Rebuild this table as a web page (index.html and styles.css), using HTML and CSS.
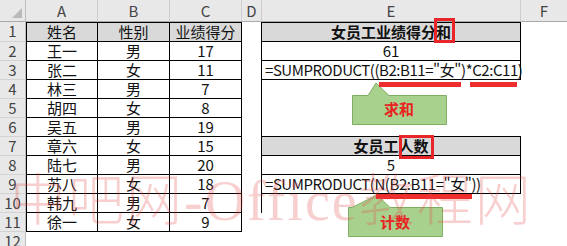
FILE: index.html
```html
<!DOCTYPE html>
<html lang="zh">
<head>
<meta charset="utf-8">
<link rel="stylesheet" href="styles.css">
</head>
<body>
<div class="page">
  <div class="sheet">
    <div class="corner"><span class="tri"></span></div>
    <div class="ch">A</div><div class="ch">B</div><div class="ch">C</div><div class="ch">D</div><div class="ch">E</div><div class="ch last">F</div>

    <div class="rh">1</div>
    <div class="c t tl top fill">姓名</div><div class="c t top fill">性别</div><div class="c t top fill">业绩得分</div><div class="c d"></div>
    <div class="c e top fill bold">女员工业绩得分和</div><div class="c"></div>

    <div class="rh">2</div>
    <div class="c t tl">王一</div><div class="c t">男</div><div class="c t">17</div><div class="c d"></div>
    <div class="c e">61</div><div class="c"></div>

    <div class="rh">3</div>
    <div class="c t tl">张二</div><div class="c t">女</div><div class="c t">11</div><div class="c d"></div>
    <div class="c e left formula">=SUMPRODUCT((B2:B11="女")*C2:C11)</div><div class="c"></div>

    <div class="rh">4</div>
    <div class="c t tl">林三</div><div class="c t">男</div><div class="c t">7</div><div class="c d"></div>
    <div class="c"></div><div class="c"></div>

    <div class="rh">5</div>
    <div class="c t tl">胡四</div><div class="c t">女</div><div class="c t">8</div><div class="c d"></div>
    <div class="c"></div><div class="c"></div>

    <div class="rh">6</div>
    <div class="c t tl">吴五</div><div class="c t">男</div><div class="c t">19</div><div class="c d"></div>
    <div class="c e-top"></div><div class="c"></div>

    <div class="rh">7</div>
    <div class="c t tl">章六</div><div class="c t">女</div><div class="c t">15</div><div class="c d"></div>
    <div class="c e fill bold">女员工人数</div><div class="c"></div>

    <div class="rh">8</div>
    <div class="c t tl">陆七</div><div class="c t">男</div><div class="c t">20</div><div class="c d"></div>
    <div class="c e">5</div><div class="c"></div>

    <div class="rh">9</div>
    <div class="c t tl">苏八</div><div class="c t">女</div><div class="c t">18</div><div class="c d"></div>
    <div class="c e left formula">=SUMPRODUCT(N(B2:B11="女"))</div><div class="c"></div>

    <div class="rh">10</div>
    <div class="c t tl">韩九</div><div class="c t">男</div><div class="c t">7</div><div class="c d"></div>
    <div class="c"></div><div class="c"></div>

    <div class="rh">11</div>
    <div class="c t tl">徐一</div><div class="c t">女</div><div class="c t">9</div><div class="c"></div>
    <div class="c"></div><div class="c"></div>

    <div class="rh">12</div>
    <div class="c"></div><div class="c"></div><div class="c"></div><div class="c"></div>
    <div class="c"></div><div class="c"></div>
  </div>

  <svg class="callouts" width="567" height="246" viewBox="0 0 567 246">
    <path d="M352.5 95.5 H368 L376 83 L389 95.5 H446.5 V124.5 H352.5 Z" fill="#a9d18e" stroke="#7fae62" stroke-width="1"/>
    <path d="M348.5 207.5 H352 L377 195 L390 207.5 H442.5 V236.5 H348.5 Z" fill="#a9d18e" stroke="#7fae62" stroke-width="1"/>
    <rect x="379" y="82" width="82" height="5" fill="#ee2d2d"/>
    <rect x="470" y="82" width="47" height="5" fill="#ee2d2d"/>
    <rect x="376" y="194" width="96" height="5" fill="#ee2d2d"/>
  </svg>

  <div class="label label-sum">求和</div>
  <div class="label label-count">计数</div>
  <div class="mark mark-he"></div>
  <div class="mark mark-rs"></div>

  <div class="watermark">中吧网<span class="wm-latin">-Office</span>教程网</div>
</div>
</body>
</html>
```

FILE: styles.css
```css
html, body {
  margin: 0;
  padding: 0;
  background: #ffffff;
}

.page {
  position: relative;
  width: 567px;
  height: 246px;
  overflow: hidden;
  font-family: "Noto Sans CJK SC", "Liberation Sans", sans-serif;
}

.sheet {
  display: grid;
  grid-template-columns: 26px 72px 72px 72px 20px 259px 46px;
  grid-template-rows: 22px 20px repeat(11, 19px);
}

.corner {
  position: relative;
  background: #e8e8e8;
  border-right: 1px solid #bdbdbd;
  border-bottom: 1px solid #a9a9a9;
  box-sizing: border-box;
}

.tri {
  position: absolute;
  right: 3px;
  bottom: 3px;
  width: 0;
  height: 0;
  border-left: 10px solid transparent;
  border-bottom: 10px solid #b9b9b9;
}

.ch {
  background: #e8e8e8;
  border-right: 1px solid #cdcdcd;
  border-bottom: 1px solid #a9a9a9;
  box-sizing: border-box;
  color: #444444;
  font-size: 15px;
  line-height: 21px;
  text-align: center;
}

.ch.last {
  border-right: none;
}

.rh {
  background: #e8e8e8;
  border-right: 1px solid #bdbdbd;
  border-bottom: 1px solid #d2d2d2;
  box-sizing: border-box;
  color: #444444;
  font-size: 15px;
  line-height: 18px;
  text-align: center;
}

.c {
  box-sizing: border-box;
  font-size: 15px;
  line-height: 18px;
  text-align: center;
  color: #111111;
  white-space: nowrap;
  overflow: visible;
}

.t {
  border-right: 1px solid #000;
  border-bottom: 1px solid #000;
}

.tl {
  border-left: 1px solid #000;
}

.top {
  border-top: 1px solid #000;
}

.d {
  border-right: 1px solid #000;
}

.e {
  border-right: 1px solid #000;
  border-bottom: 1px solid #000;
}

.e-top {
  border-bottom: 1px solid #000;
}

.fill {
  background: #d9d9d9;
}

.bold {
  font-weight: 700;
}

.left {
  text-align: left;
  padding-left: 3px;
}

.formula {
  letter-spacing: -0.45px;
}

.callouts {
  position: absolute;
  left: 0;
  top: 0;
}

.label {
  position: absolute;
  color: #e8221f;
  font-weight: 700;
  font-size: 15px;
  line-height: 20px;
  text-align: center;
}

.label-sum {
  left: 352px;
  top: 99px;
  width: 94px;
}

.label-count {
  left: 348px;
  top: 212px;
  width: 94px;
}

.mark {
  position: absolute;
  border: 3px solid #e8262a;
  box-sizing: border-box;
}

.mark-he {
  left: 434px;
  top: 18px;
  width: 21px;
  height: 25px;
}

.mark-rs {
  left: 399px;
  top: 135px;
  width: 35px;
  height: 24px;
}

.watermark {
  position: absolute;
  left: 10px;
  top: 168px;
  font-family: "Liberation Serif", "Noto Sans CJK SC", serif;
  font-weight: 300;
  font-size: 56px;
  line-height: 66px;
  color: rgba(228, 70, 70, 0.26);
  white-space: nowrap;
  letter-spacing: 2px;
}

.wm-latin {
  font-family: "Liberation Serif", serif;
  font-weight: 400;
}
```
